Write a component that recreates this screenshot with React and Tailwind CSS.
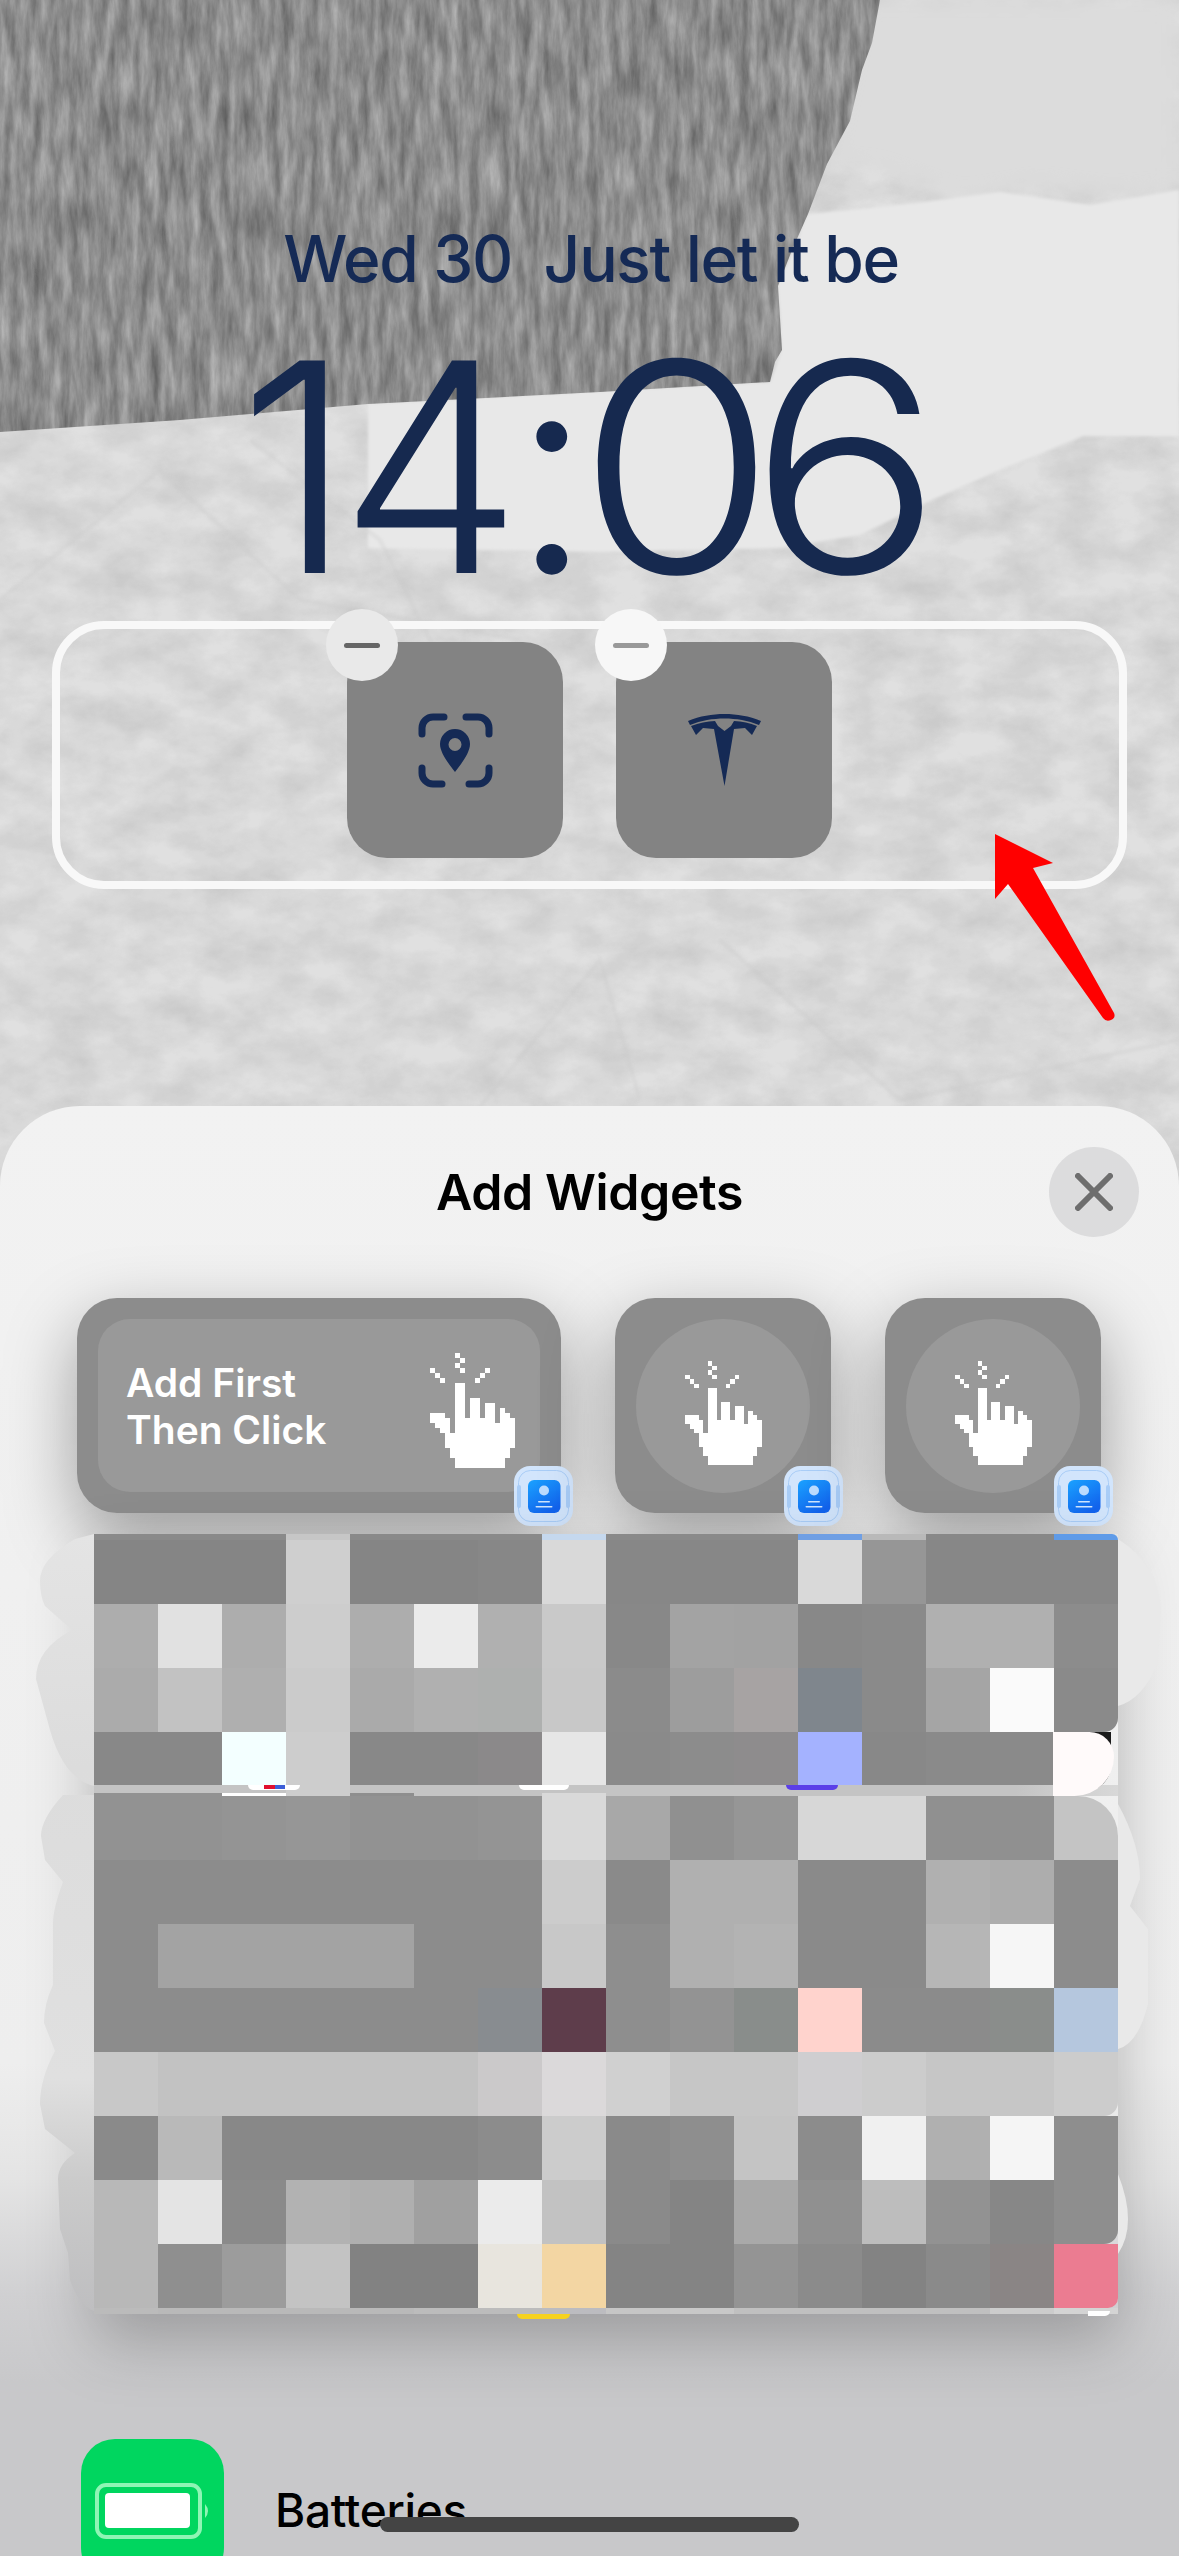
const MOSAIC = [
  ['bg-[#858585]','bg-[#858585]','bg-[#858585]','bg-[#cfcfcf]','bg-[#858585]','bg-[#858585]','bg-[#878787]','bg-[#d9d9d9]','bg-[#878787]','bg-[#878787]','bg-[#878787]','bg-[#d9d9d9]','bg-[#969696]','bg-[#878787]','bg-[#878787]','bg-[#878787]'],
  ['bg-[#adadad]','bg-[#e1e1e1]','bg-[#adadad]','bg-[#cdcdcd]','bg-[#adadad]','bg-[#ebebeb]','bg-[#b0b0b0]','bg-[#c9c9c9]','bg-[#888888]','bg-[#a3a3a3]','bg-[#a2a2a2]','bg-[#888888]','bg-[#8a8a8a]','bg-[#b0b0b0]','bg-[#b0b0b0]','bg-[#8c8c8c]'],
  ['bg-[#ababab]','bg-[#c2c2c2]','bg-[#afafaf]','bg-[#cbcbcb]','bg-[#aaaaaa]','bg-[#b0b0b0]','bg-[#aeb0af]','bg-[#c8c8c8]','bg-[#8b8b8b]','bg-[#9d9d9d]','bg-[#a7a3a3]','bg-[#7f868d]','bg-[#8a8a8a]','bg-[#a5a5a5]','bg-[#fafafa]','bg-[#8a8a8a] rounded-br-[14px]'],
];

const MOSAIC_LOW = [
  ['bg-[#929292]','bg-[#929292]','bg-[#949494]','bg-[#969696]','bg-[#929292]','bg-[#929292]','bg-[#949494]','bg-[#d9d9d9]','bg-[#a8a8a8]','bg-[#909090]','bg-[#969696]','bg-[#d7d7d7]','bg-[#d7d7d7]','bg-[#909090]','bg-[#909090]','bg-[#c4c4c4] rounded-tr-[40px]'],
  ['bg-[#8c8c8c]','bg-[#8c8c8c]','bg-[#8c8c8c]','bg-[#8c8c8c]','bg-[#8c8c8c]','bg-[#8c8c8c]','bg-[#8c8c8c]','bg-[#cccccc]','bg-[#8a8a8a]','bg-[#b0b0b0]','bg-[#b0b0b0]','bg-[#8a8a8a]','bg-[#8a8a8a]','bg-[#b0b0b0]','bg-[#adadad]','bg-[#8c8c8c]'],
  ['bg-[#8c8c8c]','bg-[#a3a3a3]','bg-[#a3a3a3]','bg-[#a3a3a3]','bg-[#a3a3a3]','bg-[#8c8c8c]','bg-[#8c8c8c]','bg-[#c8c8c8]','bg-[#8e8e8e]','bg-[#b0b0b0]','bg-[#b3b3b3]','bg-[#8a8a8a]','bg-[#8a8a8a]','bg-[#b6b6b6]','bg-[#f6f6f6]','bg-[#8c8c8c]'],
  ['bg-[#8c8c8c]','bg-[#8c8c8c]','bg-[#8c8c8c]','bg-[#8c8c8c]','bg-[#8c8c8c]','bg-[#8c8c8c]','bg-[#888c90]','bg-[#5e3d4b]','bg-[#8e8e8e]','bg-[#939393]','bg-[#898d8b]','bg-[#ffd3cd]','bg-[#8b8b8b]','bg-[#8b8b8b]','bg-[#8a8d8b]','bg-[#b5c7de]'],
  ['bg-[#c8c8c8]','bg-[#c2c2c2]','bg-[#c2c2c2]','bg-[#c2c2c2]','bg-[#c2c2c2]','bg-[#c2c2c2]','bg-[#cbc9ca]','bg-[#dbd9da]','bg-[#d0d0d0]','bg-[#c6c6c6]','bg-[#c6c6c6]','bg-[#cfced0]','bg-[#cccccc]','bg-[#c6c6c6]','bg-[#c6c6c6]','bg-[#cccccc] rounded-br-[14px]'],
  ['bg-[#8a8a8a]','bg-[#b9b9b9]','bg-[#888888]','bg-[#888888]','bg-[#888888]','bg-[#888888]','bg-[#8c8c8c]','bg-[#cccccc]','bg-[#8a8a8a]','bg-[#8e8e8e]','bg-[#c4c4c4]','bg-[#8c8c8c]','bg-[#f0f0f0]','bg-[#b0b0b0]','bg-[#f5f5f5]','bg-[#8e8e8e]'],
  ['bg-[#b8b8b8]','bg-[#e4e4e4]','bg-[#8a8a8a]','bg-[#b2b2b2]','bg-[#afafaf]','bg-[#a0a0a0]','bg-[#ebebeb]','bg-[#c2c2c2]','bg-[#8a8a8a]','bg-[#848484]','bg-[#a9a9a9]','bg-[#909090]','bg-[#bdbdbd]','bg-[#929292]','bg-[#878787]','bg-[#8e8e8e] rounded-br-[14px]'],
  ['bg-[#b8b8b8]','bg-[#8f8f8f]','bg-[#9c9c9c]','bg-[#c3c3c3]','bg-[#828282]','bg-[#828282]','bg-[#e8e5de]','bg-[#f3d6a3]','bg-[#848484]','bg-[#848484]','bg-[#949494]','bg-[#8b8b8b]','bg-[#838383]','bg-[#8a8a8a]','bg-[#8a8585]','bg-[#eb7c91] rounded-br-[10px]'],
];

const TOP_SLIVER = ['bg-[#8a8a8a]','bg-[#8a8a8a]','bg-[#8a8a8a]','bg-[#c6c6c6]','bg-[#8a8a8a]','bg-[#8a8a8a]','bg-[#8a8a8a]','bg-[#c5d8ee]','bg-[#8a8a8a]','bg-[#8a8a8a]','bg-[#8a8a8a]','bg-[#6f9fe4]','bg-[#b9b9b9]','bg-[#888888]','bg-[#888888]','bg-[#5f9be8] rounded-tr-[8px]'];
const GAP_A = ['','','','bg-[#cdcdcd]','','','','','','','','','','','',''];
const GAP_B = ['bg-[#929292]','bg-[#929292]','bg-[#ffffff]','bg-[#cdcdcd]','bg-[#8e8e8e]','','','bg-[#d9d9d9]','','','','','','','',''];
const BOTTOM_SLIVER = ['bg-[#bbbbbb]','bg-[#b9b9b9]','bg-[#b9b9b9]','bg-[#b9b9b9]','bg-[#b9b9b9]','bg-[#bcbcbc]','bg-[#bcbcbc]','bg-[#bcbcc0]','bg-[#c6c6c6]','bg-[#c8c8c8]','bg-[#c0c0c0]','bg-[#c0c0c0]','bg-[#c0c0c0]','bg-[#c0c0c0]','bg-[#cccccc]','bg-[#d4d4d4]'];
const ROW_THREE = ['bg-[#888888]','bg-[#888888]','bg-[#f3ffff]','bg-[#cdcdcd]','bg-[#888888]','bg-[#888888]','bg-[#8b898a]','bg-[#e6e6e6]','bg-[#8a8a8a]','bg-[#8c8c8c]','bg-[#8e8c8d]','bg-[#a4b2ff]','bg-[#888888]','bg-[#8a8a8a]','bg-[#8a8a8a]',''];

// hand pixels, one row per [row, [from, to], ...]
const HAND_ROWS = [
  [-6, [5, 5]], [-5, [6, 6]], [-4, [5, 5]],
  [-3, [0, 0], [6, 6], [11, 11]], [-2, [1, 1], [10, 10]], [-1, [2, 2], [9, 9]],
  [0, [5, 6]], [1, [5, 6]], [2, [5, 6]], [3, [5, 6], [8, 9]],
  [4, [5, 6], [8, 9], [11, 12]], [5, [5, 6], [8, 9], [11, 12], [14, 14]],
  [6, [0, 2], [5, 6], [8, 9], [11, 12], [14, 15]],
  [7, [0, 3], [5, 12], [14, 16]], [8, [1, 3], [5, 16]], [9, [2, 3], [5, 16]],
  [10, [3, 16]], [11, [3, 16]], [12, [3, 16]],
  [13, [4, 15]], [14, [4, 15]], [15, [5, 14]], [16, [5, 14]],
];

function Hand({ className }) {
  return (
    <svg viewBox="0 -6 17 23" shapeRendering="crispEdges" className={className}>
      {HAND_ROWS.map(([row, ...spans]) =>
        spans.map(([a, b]) => (
          <rect key={`${row}-${a}`} x={a} y={row} width={b - a + 1} height={1} fill="#fff" />
        ))
      )}
    </svg>
  );
}

function Badge({ className }) {
  return (
    <svg viewBox="0 0 59 60" className={`absolute ${className}`}>
      <defs>
        <linearGradient id="badgeBlue" x1="0" y1="0" x2="0.6" y2="1">
          <stop offset="0" stopColor="#1aa2ff" />
          <stop offset="1" stopColor="#1364ee" />
        </linearGradient>
      </defs>
      <rect width="59" height="60" rx="16" fill="#d2e5fc" />
      <rect x="4.5" y="4.5" width="50" height="51" rx="12" fill="none" stroke="#a9cdf7" strokeWidth="1" />
      <rect x="3" y="19" width="4" height="23" rx="2" fill="#a9cdf7" />
      <rect x="52" y="19" width="4" height="23" rx="2" fill="#a9cdf7" />
      <rect x="14" y="14" width="32.5" height="33" rx="6" fill="url(#badgeBlue)" />
      <circle cx="30" cy="24.5" r="5" fill="#bcdcff" />
      <rect x="24" y="35" width="12" height="1.6" rx="0.8" fill="#cfe6ff" />
      <rect x="21.5" y="40" width="17" height="1.6" rx="0.8" fill="#cfe6ff" />
    </svg>
  );
}

function Wallpaper() {
  return (
    <svg viewBox="0 0 1179 1180" className="absolute left-0 top-0 w-[1179px] h-[1180px]">
      <defs>
        <filter id="paper" x="0" y="0" width="100%" height="100%" colorInterpolationFilters="sRGB">
          <feTurbulence type="fractalNoise" baseFrequency="0.02 0.03" numOctaves="5" seed="11" />
          <feColorMatrix values="0 0 0 0 0.5 0 0 0 0 0.5 0 0 0 0 0.5 0.3 0 0 0 -0.08" />
          <feComposite in2="SourceAlpha" operator="in" />
          <feBlend in2="SourceGraphic" mode="multiply" />
        </filter>
        <filter id="bark" x="0" y="0" width="100%" height="100%" colorInterpolationFilters="sRGB">
          <feTurbulence type="fractalNoise" baseFrequency="0.1 0.02" numOctaves="5" seed="3" />
          <feColorMatrix values="0.38 0 0 0 0.36 0.38 0 0 0 0.36 0.38 0 0 0 0.36 0 0 0 0 1" />
          <feComposite in2="SourceAlpha" operator="in" />
        </filter>
        <filter id="soft"><feGaussianBlur stdDeviation="1.5" /></filter>
        <filter id="softer"><feGaussianBlur stdDeviation="10" /></filter>
      </defs>
      <rect width="1179" height="1180" fill="#e0e0e0" filter="url(#paper)" />
      <polygon points="860,0 1179,0 1179,190 1110,196 1040,186 960,200 880,170 827,164" fill="#dcdcdc" filter="url(#softer)" />
      <polygon points="808,214 900,205 1000,192 1090,205 1179,190 1179,436 1083,436 1000,470 932,500 860,535 780,548 600,552 368,548 368,404 770,382 782,350 778,286" fill="#e8e8e8" filter="url(#soft)" />
      <polygon points="880,0 872,43 862,70 850,121 827,164 808,214 792,250 778,286 782,350 775,362 770,382 600,392 368,404 180,420 0,432 0,0" fill="#8d8d8d" filter="url(#bark)" />
      <g fill="none" stroke="#c8c8c8" strokeWidth="4" filter="url(#soft)" opacity="0.3">
        <path d="M0 600 L160 470 L300 600 L520 640" />
        <path d="M250 440 L380 540 L460 700" />
        <path d="M420 1180 L600 960 L640 1100" />
        <path d="M720 940 L900 1100 L1179 1040" />
      </g>
    </svg>
  );
}

function LocationIcon() {
  return (
    <svg viewBox="0 0 75 75" className="w-[75px] h-[75px] mt-[71px]">
      <g fill="none" stroke="#152a55" strokeWidth="7" strokeLinecap="round">
        <path d="M4 21 V15 A11 11 0 0 1 15 4 H26" />
        <path d="M48 4 H60 A11 11 0 0 1 71 15 V21" />
        <path d="M4 55 V60 A11 11 0 0 0 15 71 H24" />
        <path d="M51 71 H60 A11 11 0 0 0 71 60 V55" />
      </g>
      <path fillRule="evenodd" fill="#152a55" d="M37 16 a15 15 0 0 1 15 15 c0 9 -9 20 -15 28 c-6 -8 -15 -19 -15 -28 a15 15 0 0 1 15 -15 z M37 25 a6.5 6.5 0 1 0 0 13 a6.5 6.5 0 1 0 0 -13 z" />
    </svg>
  );
}

function TeslaIcon() {
  return (
    <svg viewBox="0 0 73 72" className="w-[73px] h-[72px] mt-[72px]">
      <path fill="#152a55" d="M0 7 C12 2 24 0 36.500 0 C49 0 61 2 73 7 L71 11 C60 6.500 48 4.500 36.500 4.500 C25 4.500 13 6.500 2 11 Z" />
      <path fill="#152a55" d="M3 12 C11 9 19 7.500 27 7 L30 12 L36.500 17 L43 12 L46 7 C54 7.500 62 9 69 12 L64 21 L57 14 L46 15 L36.500 72 L26 15 L15 14 L8 21 Z" />
    </svg>
  );
}

function MinusButton({ className, barClass }) {
  return (
    <div className={`absolute top-[-33px] w-[72px] h-[72px] rounded-full flex items-center justify-center ${className}`}>
      <div className={`w-[36px] h-[5px] rounded-full ${barClass}`} />
    </div>
  );
}

function MosaicRow({ cells, height }) {
  return (
    <div className={`relative grid grid-cols-[repeat(16,64px)] ${height}`}>
      {cells.map((c, i) => <div key={i} className={c} />)}
    </div>
  );
}

function App() {
  return (
    <div className="relative w-[1179px] h-[2556px] overflow-hidden bg-[#dcdcdc] font-['Inter',sans-serif]">
      <Wallpaper />

      {/* lock screen */}
      <div className="relative h-[1106px] flex flex-col items-center pt-[223px] text-[#152a55]">
        <div className="text-[64px] leading-[72px] font-medium tracking-[-1.3px] whitespace-pre ml-[3px]">Wed 30  Just let it be</div>
        <div className="mt-[26px] self-start ml-[238px] whitespace-nowrap text-[292px] leading-[292px] [font-weight:290] text-[#16294f]">
          <span className="tracking-[-14px]">1</span>
          <span className="tracking-[-12px]">4</span>
          <span className="tracking-[-7px]">:</span>
          <span className="inline-block tracking-[-8px] scale-x-[1.1]">0</span>
          <span className="inline-block scale-x-[1.1]">6</span>
        </div>
        <div className="mt-[8px] w-[1075px] h-[268px] border-[8px] border-[#f8f8f8] rounded-[52px] flex gap-[53px] pl-[287px] pt-[13px]">
          <div className="relative w-[216px] h-[216px] rounded-[40px] bg-[#838383] flex justify-center">
            <MinusButton className="left-[-21px] bg-[#e9e9e9]" barClass="bg-[#666666]" />
            <LocationIcon />
          </div>
          <div className="relative w-[216px] h-[216px] rounded-[40px] bg-[#838383] flex justify-center">
            <MinusButton className="left-[-21px] bg-[#f7f7f7]" barClass="bg-[#999999]" />
            <TeslaIcon />
          </div>
        </div>
      </div>

      {/* arrow */}
      <svg viewBox="0 0 130 200" className="absolute left-[990px] top-[830px] w-[130px] h-[200px]">
        <path fill="#ff0000" d="M5 4 L63 33 L43 38 L124 183 Q126 188 121 190 Q116 192 113 188 L18 54 L5 69 Z" />
      </svg>

      {/* widget sheet */}
      <div className="relative h-[1450px] rounded-t-[80px] overflow-hidden bg-[linear-gradient(180deg,#f2f2f2_0%,#eeeeee_66%,#e4e4e4_74%,#d0d0d2_82%,#c8c8ca_88%,#c8c8ca_100%)]">
        <div className="relative h-[172px] flex items-center justify-center">
          <h1 className="text-[50px] font-semibold text-black tracking-[-0.4px]">Add Widgets</h1>
          <button className="absolute right-[40px] top-[41px] w-[90px] h-[90px] rounded-full bg-[#dcdcdd] flex items-center justify-center">
            <svg viewBox="0 0 38 38" className="w-[38px] h-[38px]">
              <path d="M3 3 L35 35 M35 3 L3 35" stroke="#6e6e6e" strokeWidth="6" strokeLinecap="round" />
            </svg>
          </button>
        </div>

        <div className="mt-[20px] pl-[77px] flex gap-[54px]">
          <div className="relative w-[484px] h-[215px] rounded-[40px] bg-[#8c8c8c] p-[21px] shadow-[0_25px_70px_rgba(0,0,0,0.35)]">
            <div className="h-full rounded-[32px] bg-[#999999] flex items-center justify-between pl-[28px] pr-[25px]">
              <div className="text-[39px] leading-[47px] font-semibold text-white">Add First<br />Then Click</div>
              <Hand className="w-[85px] h-[115px] mt-[10px]" />
            </div>
            <Badge className="left-[437px] top-[168px] w-[59px] h-[60px]" />
          </div>
          {['a', 'b'].map(id => (
            <div key={id} className="relative w-[216px] h-[215px] rounded-[40px] bg-[#8c8c8c] p-[21px] shadow-[0_25px_70px_rgba(0,0,0,0.35)]">
              <div className="w-[174px] h-[174px] rounded-full bg-[#999999] flex items-center justify-center">
                <Hand className="w-[77px] h-[104px] mt-[14px]" />
              </div>
              <Badge className="left-[169px] top-[168px] w-[59px] h-[60px]" />
            </div>
          ))}
        </div>

        {/* blurred preview list */}
        <div className="relative mt-[21px] ml-[94px] w-[1024px] shadow-[0_25px_60px_rgba(0,0,0,0.25)]">
          <svg viewBox="0 0 60 780" className="absolute left-[-60px] top-0 w-[60px] h-[780px]">
            <defs>
              <linearGradient id="haloLeft" x1="0" y1="0" x2="0" y2="1">
                <stop offset="0" stopColor="#e4e4e4" />
                <stop offset="0.3" stopColor="#dcdcdc" />
                <stop offset="0.7" stopColor="#e0e0e0" />
                <stop offset="0.83" stopColor="#cbcbcb" />
                <stop offset="1" stopColor="#bebec0" />
              </linearGradient>
            </defs>
            <path fill="url(#haloLeft)" d="M60 0 L41 5 Q6 25 6 47 Q6 62 11 72 L38 96 Q2 115 2 145 L16 196 Q30 245 60 252 V261 L29 261 Q7 285 7 302 L11 326 L29 348 Q19 375 19 389 V451 Q10 470 10 489 L21 517 Q6 545 6 570 L11 595 L41 619 Q24 630 24 645 L26 695 L34 719 L36 746 Q45 772 60 777 Z" />
          </svg>
          <svg viewBox="0 0 45 780" className="absolute left-[1024px] top-0 w-[45px] h-[780px]">
            <path fill="#e9e9e9" d="M0 5 Q40 30 43 74 L40 129 Q25 165 0 172 Z M0 270 Q22 310 22 345 L12 372 L30 395 V470 Q20 510 0 515 Z M0 640 Q20 690 0 720 Z" />
          </svg>

          <MosaicRow cells={TOP_SLIVER} height="h-[6px]" />
          {MOSAIC.map((cells, i) => <MosaicRow key={i} cells={cells} height="h-[64px]" />)}
          <MosaicRow cells={ROW_THREE} height="h-[53px]" />
          <div className="relative bg-[linear-gradient(90deg,#c4c4c4_0%,#c4c4c4_90%,#d8d8d8_100%)]">
            <MosaicRow cells={GAP_A} height="h-[8px]" />
            <MosaicRow cells={GAP_B} height="h-[3px]" />
            <div className="absolute left-[154px] top-0 w-[52px] h-[5px] rounded-b-[8px] bg-white flex justify-center">
              <div className="w-[11px] h-[4px] bg-[#e0102e]" />
              <div className="w-[10px] h-[4px] bg-[#3b5fd8]" />
            </div>
            <div className="absolute left-[425px] top-0 w-[50px] h-[5px] rounded-b-[8px] bg-white" />
            <div className="absolute left-[692px] top-0 w-[52px] h-[5px] rounded-b-[8px] bg-[#5b3fe8]" />
            {/* clipped corner of the last tile */}
            <div className="absolute left-[959px] top-[-53px] w-[58px] h-[59px] rounded-br-[26px] bg-[#1a1a1a]" />
            <div className="absolute left-[959px] top-[-53px] w-[61px] h-[64px] rounded-tr-[30px] rounded-br-[48px] bg-[#fffafa]" />
          </div>
          {MOSAIC_LOW.map((cells, i) => <MosaicRow key={i} cells={cells} height="h-[64px]" />)}
          <div className="relative">
            <MosaicRow cells={BOTTOM_SLIVER} height="h-[6px]" />
            <div className="absolute left-[423px] top-[6px] w-[53px] h-[5px] rounded-b-[8px] bg-[#f6d21f]" />
            <div className="absolute left-[994px] top-[3px] w-[22px] h-[5px] rounded-br-[8px] bg-white" />
          </div>
        </div>

        <div className="mt-[125px] ml-[81px] flex items-center gap-[51px]">
          <div className="w-[143px] h-[143px] rounded-[34px] bg-[#00d65f] flex items-center justify-center">
            <svg viewBox="0 0 118 56" className="w-[118px] h-[56px] ml-[3px]">
              <rect x="2" y="2" width="103" height="52" rx="9" fill="none" stroke="#8ff5b5" strokeWidth="4" />
              <rect x="10" y="10" width="85" height="35" rx="4" fill="#ffffff" />
              <path d="M110 21 Q116 28 110 35 Z" fill="#8ff5b5" />
            </svg>
          </div>
          <div className="text-[46px] font-medium text-black tracking-[-0.3px]">Batteries</div>
        </div>
      </div>

      {/* home indicator */}
      <div className="absolute left-[380px] top-[2517px] w-[419px] h-[15px] rounded-full bg-[#444444]" />
    </div>
  );
}

export default App;
